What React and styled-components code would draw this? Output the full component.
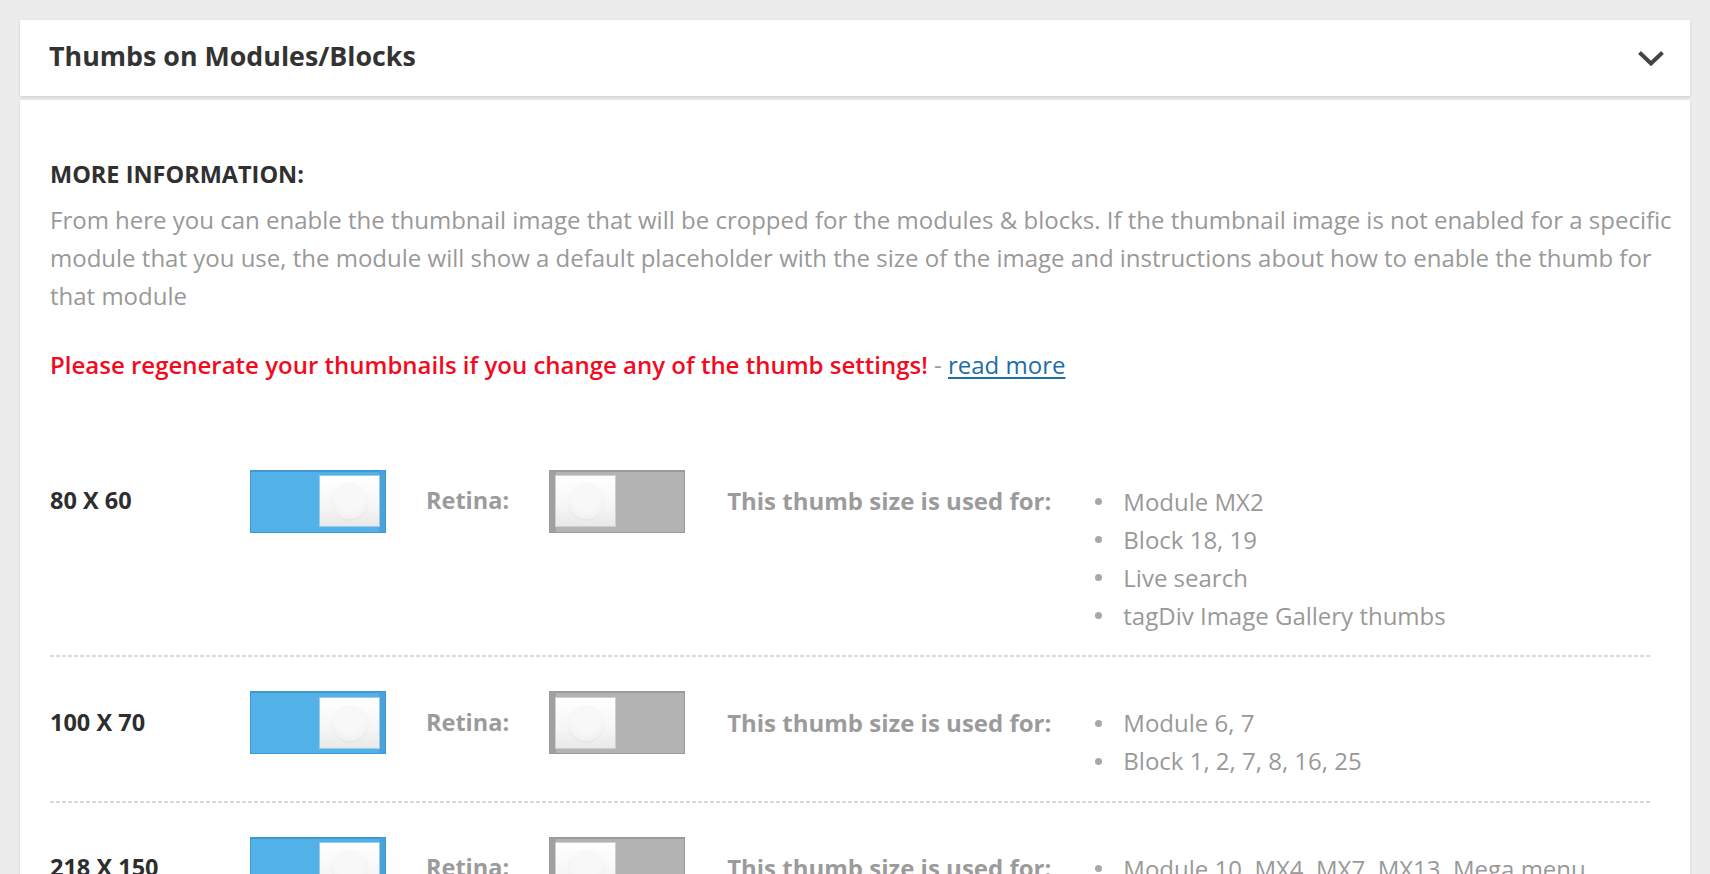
import React from "react";
import styled, { createGlobalStyle } from "styled-components";

const GlobalStyle = createGlobalStyle`
  html, body { margin: 0; padding: 0; background: #ececec; }
  body { font-family: "Open Sans", "Liberation Sans", sans-serif; }
  * { box-sizing: border-box; }
`;

const Page = styled.div`
  display: flex;
  flex-direction: column;
  gap: 4px;
  padding: 20px 20px 40px;
`;

const HeaderCard = styled.div`
  height: 76px;
  background: #fff;
  box-shadow: 0 1px 3px rgba(0, 0, 0, 0.14);
  display: flex;
  align-items: center;
  justify-content: space-between;
  padding: 0 26px 3px 29px;
`;

const Title = styled.h2`
  margin: 0;
  font: 700 26.8px/1.2 "Open Sans", "Liberation Sans", sans-serif;
  color: #333;
`;

const Chevron = styled.svg`
  display: block;
  width: 26px;
  height: 15px;
  margin-top: 3px;
`;

const BodyCard = styled.div`
  background: #fff;
  box-shadow: 0 1px 3px rgba(0, 0, 0, 0.1);
  padding: 54.5px 12px 0 30px;
`;

const InfoHeading = styled.h3`
  margin: 0;
  font: 700 23.5px/38px "Open Sans", "Liberation Sans", sans-serif;
  color: #303030;
  text-transform: uppercase;
`;

const InfoText = styled.p`
  margin: 8px 0 0;
  font: 400 24px/38px "Open Sans", "Liberation Sans", sans-serif;
  color: #999;
`;

const Warning = styled.p`
  margin: 31px 0 0;
  font: 600 24px/38px "Open Sans", "Liberation Sans", sans-serif;
  color: #f20b1e;
`;

const Dash = styled.span`
  font-weight: 400;
  color: #999;
`;

const ReadMore = styled.a`
  font-weight: 400;
  color: #1c6ea9;
  text-decoration: underline;
  text-underline-offset: 3px;
`;

const Rows = styled.div`
  margin: 52px 28px 0 0;
  display: flex;
  flex-direction: column;
`;

const Row = styled.div`
  display: flex;
  align-items: flex-start;
  padding: 34px 0 22.5px;
  background: repeating-linear-gradient(to right, #d8d8d8 0 4px, transparent 4px 6px) left bottom / 100% 2px no-repeat;
`;

const SizeLabel = styled.div`
  flex: none;
  width: 200px;
  height: 63px;
  display: flex;
  align-items: center;
  font: 700 23.5px/1 "Open Sans", "Liberation Sans", sans-serif;
  color: #2e2e2e;
`;

const FieldLabel = styled.div`
  flex: none;
  height: 63px;
  display: flex;
  align-items: center;
  margin: 0 ${(p) => p.$right}px 0 ${(p) => p.$left}px;
  font: 700 ${(p) => p.$size}px/1 "Open Sans", "Liberation Sans", sans-serif;
  color: #9b9b9b;
`;

const Toggle = styled.div`
  flex: none;
  width: 136px;
  height: 63px;
  display: flex;
  align-items: center;
  justify-content: ${(p) => (p.$on ? "flex-end" : "flex-start")};
  padding: 0 5px;
  background: ${(p) => (p.$on ? "#52b2e7" : "#b3b3b3")};
  border: 1px solid ${(p) => (p.$on ? "#3f98cf" : "#9a9a9a")};
  box-shadow: ${(p) =>
    p.$on
      ? "inset -6px 0 0 #4aa2d9, inset 0 1px 0 #3f98cf"
      : "inset 6px 0 0 #a0a0a0, inset 0 1px 0 #9a9a9a"};
`;

const Knob = styled.span`
  width: 61px;
  height: 52px;
  display: flex;
  align-items: center;
  justify-content: center;
  background: linear-gradient(#ffffff 0%, #f6f6f6 60%, #e9e9e9 100%);
  border: 1px solid ${(p) => (p.$on ? "#9ccbe9" : "#cfcfcf")};

  &::after {
    content: "";
    width: 36px;
    height: 36px;
    border-radius: 50%;
    background: radial-gradient(circle at 50% 35%, #f8f8f8 50%, #ebebeb 100%);
    box-shadow: 0 1px 2px rgba(0, 0, 0, 0.05);
  }
`;

const UsedList = styled.ul`
  list-style: none;
  margin: 13px 0 0 42px;
  padding: 0;
`;

const UsedItem = styled.li`
  display: flex;
  align-items: center;
  gap: 21px;
  padding-left: 2px;
  font: 400 24px/38px "Open Sans", "Liberation Sans", sans-serif;
  color: #999;

  &::before {
    content: "";
    width: 7px;
    height: 7px;
    border-radius: 50%;
    background: #a8a8a8;
    flex: none;
  }
`;

const rows = [
  {
    size: "80 X 60",
    items: ["Module MX2", "Block 18, 19", "Live search", "tagDiv Image Gallery thumbs"],
  },
  { size: "100 X 70", items: ["Module 6, 7", "Block 1, 2, 7, 8, 16, 25"] },
  {
    size: "218 X 150",
    items: ["Module 10, MX4, MX7, MX13, Mega menu", "Block 9, 10, 21", "Related posts"],
  },
];

function ThumbRow({ size, items }) {
  return (
    <Row>
      <SizeLabel>{size}</SizeLabel>
      <Toggle $on>
        <Knob $on />
      </Toggle>
      <FieldLabel $left={40} $right={40} $size={23.5}>
        Retina:
      </FieldLabel>
      <Toggle>
        <Knob />
      </Toggle>
      <FieldLabel $left={42} $right={0} $size={24}>
        This thumb size is used for:
      </FieldLabel>
      <UsedList>
        {items.map((it) => (
          <UsedItem key={it}>{it}</UsedItem>
        ))}
      </UsedList>
    </Row>
  );
}

export default function App() {
  return (
    <>
      <GlobalStyle />
      <Page>
        <HeaderCard>
          <Title>Thumbs on Modules/Blocks</Title>
          <Chevron viewBox="0 0 26 15">
            <polyline
              points="1.5,1.5 13,12.5 24.5,1.5"
              fill="none"
              stroke="#444"
              strokeWidth="4"
            />
          </Chevron>
        </HeaderCard>
        <BodyCard>
          <InfoHeading>More information:</InfoHeading>
          <InfoText>
            From here you can enable the thumbnail image that will be cropped for the modules &amp;
            blocks. If the thumbnail image is not enabled for a specific module that you use, the
            module will show a default placeholder with the size of the image and instructions about
            how to enable the thumb for that module
          </InfoText>
          <Warning>
            Please regenerate your thumbnails if you change any of the thumb settings!
            <Dash> - </Dash>
            <ReadMore href="#">read more</ReadMore>
          </Warning>
          <Rows>
            {rows.map((r) => (
              <ThumbRow key={r.size} {...r} />
            ))}
          </Rows>
        </BodyCard>
      </Page>
    </>
  );
}
